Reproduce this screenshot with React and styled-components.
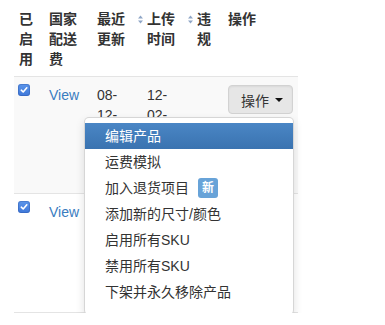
import React from 'react';
import styled, { createGlobalStyle } from 'styled-components';

const GlobalStyle = createGlobalStyle`
  body {
    margin: 0;
    background: #fff;
    font-family: 'Liberation Sans', 'Noto Sans CJK SC', sans-serif;
    font-size: 14px;
    line-height: 20px;
    color: #333;
  }
`;

const columns = '30px 48px 50px 50px 31px 75px';

const menuItems = [
  { label: '编辑产品', active: true },
  { label: '运费模拟' },
  { label: '加入退货项目', badge: '新' },
  { label: '添加新的尺寸/颜色' },
  { label: '启用所有SKU' },
  { label: '禁用所有SKU' },
  { label: '下架并永久移除产品' },
];

const rows = [
  { id: 1, updated: '08-12-2018', uploaded: '12-02-2017', open: true, height: 116, striped: true },
  { id: 2, updated: '08-12-2018', uploaded: '12-02-2017', open: false, height: 118 },
];

const SortIcon = () => (
  <SortSvg width="5" height="9" viewBox="0 0 5 9">
    <path d="M2.5 0.5 L5 3.5 L0 3.5 Z" fill="#8fa6c6" />
    <path d="M2.5 8.5 L5 5.5 L0 5.5 Z" fill="#8fa6c6" />
  </SortSvg>
);

const Checkbox = () => (
  <Check>
    <svg width="8" height="8" viewBox="0 0 8 8">
      <path d="M1.3 4.2 L3.2 6 L6.8 1.8" stroke="#fff" strokeWidth="1.6" fill="none" strokeLinecap="round" strokeLinejoin="round" />
    </svg>
  </Check>
);

const ActionMenu = ({ open }) => (
  <Dropdown>
    <ActionButton $open={open}>
      操作
      <Caret />
    </ActionButton>
    {open && (
      <Menu>
        {menuItems.map((item) => (
          <MenuItem key={item.label} $active={item.active}>
            {item.label}
            {item.badge && <Badge>{item.badge}</Badge>}
          </MenuItem>
        ))}
      </Menu>
    )}
  </Dropdown>
);

const App = () => {
  return (
    <>
      <GlobalStyle />
      <Page>
        <Table>
          <HeadRow>
            <Th>已启用</Th>
            <Th>国家配送费</Th>
            <Th>最近更新</Th>
            <Th $sortable>
              <SortIcon />
              <span>上传时间</span>
            </Th>
            <Th $sortable>
              <SortIcon />
              <span>违规</span>
            </Th>
            <Th>操作</Th>
          </HeadRow>
          {rows.map((row) => (
            <Row key={row.id} $striped={row.striped} $height={row.height}>
              <Td>
                <Checkbox />
              </Td>
              <Td>
                <Link>View</Link>
              </Td>
              <Td>{row.open ? row.updated : ''}</Td>
              <Td>{row.open ? row.uploaded : ''}</Td>
              <Td />
              <Td $front={row.open}>
                <ActionMenu open={row.open} />
              </Td>
            </Row>
          ))}
        </Table>
      </Page>
    </>
  );
};

export default App;

const Page = styled.div`
  padding: 0 0 0 14px;
`;

const Table = styled.div`
  width: 284px;
`;

const HeadRow = styled.div`
  display: grid;
  grid-template-columns: ${columns};
  border-bottom: 1px solid #e4e4e4;
`;

const Th = styled.div`
  padding: 9px 5px 7px;
  font-weight: bold;
  color: #333;
  display: flex;
  align-items: flex-start;
  gap: 4px;
  margin-left: ${(p) => (p.$sortable ? '-9px' : '0')};
`;

const SortSvg = styled.svg`
  flex: none;
  margin-top: 6px;
`;

const Row = styled.div`
  display: grid;
  grid-template-columns: ${columns};
  min-height: ${(p) => p.$height}px;
  background: ${(p) => (p.$striped ? '#f9f9f9' : '#fff')};
  border-bottom: 1px solid #e4e4e4;
`;

const Td = styled.div`
  padding: 8px 5px;
  color: #333;
  position: ${(p) => (p.$front ? 'relative' : 'static')};
  z-index: ${(p) => (p.$front ? 5 : 'auto')};
`;

const Check = styled.span`
  display: flex;
  align-items: center;
  justify-content: center;
  width: 12px;
  height: 12px;
  margin: -1px 0 0 -1px;
  border-radius: 3px;
  background: linear-gradient(#5b95ea, #3f78d9);
  box-shadow: inset 0 0 0 1px rgba(40, 80, 160, 0.35);
`;

const Link = styled.span`
  color: #3a7cbf;
`;

const Dropdown = styled.div`
  position: relative;
  display: inline-block;
`;

const ActionButton = styled.button`
  display: flex;
  align-items: center;
  height: 29px;
  padding: 0 9px 0 12px;
  font-family: inherit;
  font-size: 14px;
  color: #333;
  white-space: nowrap;
  border: 1px solid #d2d2d2;
  border-radius: 4px;
  background: ${(p) => (p.$open ? '#e6e6e6' : 'linear-gradient(#fff, #e6e6e6)')};
  box-shadow: inset 0 1px 2px rgba(0, 0, 0, 0.06);
`;

const Caret = styled.span`
  display: inline-block;
  flex: none;
  margin-left: 6px;
  margin-top: 1px;
  border-top: 4px solid #111;
  border-left: 4px solid transparent;
  border-right: 4px solid transparent;
`;

const Menu = styled.div`
  position: absolute;
  top: calc(100% + 3px);
  right: -1px;
  width: 210px;
  box-sizing: border-box;
  padding: 5px 0 9px;
  background: #fff;
  border: 1px solid rgba(0, 0, 0, 0.16);
  border-radius: 5px;
  box-shadow: 0 4px 10px rgba(0, 0, 0, 0.12);
`;

const MenuItem = styled.div`
  display: flex;
  align-items: center;
  padding: 3px 20px;
  line-height: 20px;
  white-space: nowrap;
  color: ${(p) => (p.$active ? '#fff' : '#333')};
  background: ${(p) => (p.$active ? 'linear-gradient(#4a86c5, #3a73b0)' : 'transparent')};
`;

const Badge = styled.span`
  display: inline-block;
  margin-left: 9px;
  padding: 0 4px;
  height: 20px;
  line-height: 20px;
  font-size: 12px;
  font-weight: bold;
  color: #fff;
  background: #68a3d8;
  border-radius: 3px;
`;
